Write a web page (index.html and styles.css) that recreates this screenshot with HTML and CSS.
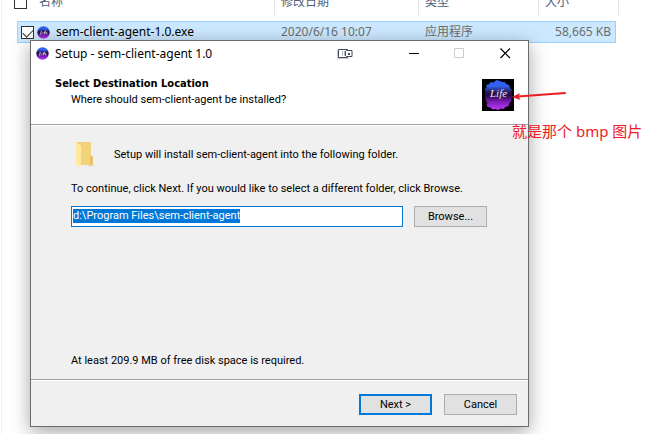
FILE: index.html
```html
<!DOCTYPE html>
<html lang="zh-CN">
<head>
<meta charset="utf-8">
<title>Setup - sem-client-agent 1.0</title>
<link rel="stylesheet" href="styles.css">
</head>
<body>
<svg class="defs" width="0" height="0" aria-hidden="true">
  <defs>
    <linearGradient id="orb" x1="0" y1="0" x2="0" y2="1">
      <stop offset="0" stop-color="#2f5cf6"/>
      <stop offset=".2" stop-color="#3262f0"/>
      <stop offset=".42" stop-color="#241550"/>
      <stop offset=".52" stop-color="#2a0b4a"/>
      <stop offset=".72" stop-color="#7a1eb4"/>
      <stop offset="1" stop-color="#c238ff"/>
    </linearGradient>
    <symbol id="app" viewBox="0 0 13 13">
      <circle cx="6.5" cy="6.5" r="6.2" fill="url(#orb)"/>
      <path d="M3 8h1.500M3.500 7.500l1-2.500M5.500 7.500l.8-1.500M7 8.500l1.500-4M7 6.300h2M9 7.500q.2-1.500 1.200-1.300M9 7.700h1.300" fill="none" stroke="#d5c4e6" stroke-width=".9"/>
    </symbol>
  </defs>
</svg>
<main class="desktop">
  <section class="explorer">
    <table class="files">
      <thead>
        <tr>
          <th><input type="checkbox" class="check" aria-label="全选"><span class="head-name">名称</span></th>
          <th>修改日期</th>
          <th>类型</th>
          <th>大小</th>
        </tr>
      </thead>
      <tbody>
        <tr>
          <td class="file-name">
            <input type="checkbox" class="check" id="file" checked>
            <svg class="app-icon" aria-hidden="true"><use href="#app"/></svg>
            <label for="file">sem-client-agent-1.0.exe</label>
          </td>
          <td>2020/6/16 10:07</td>
          <td>应用程序</td>
          <td class="size">58,665 KB</td>
        </tr>
      </tbody>
    </table>
  </section>

  <section class="dialog" role="dialog" aria-labelledby="dialog-title">
    <header class="titlebar">
      <svg class="app-icon" aria-hidden="true"><use href="#app"/></svg>
      <h1 id="dialog-title">Setup - sem-client-agent 1.0</h1>
      <svg class="device" viewBox="0 0 16 10" aria-hidden="true">
        <path d="M.5 1v8.500h12" fill="none" stroke="#c9c9cc"/>
        <path d="M1.500.5h9v8h-9z" fill="#fff" stroke="#44485a"/>
        <path d="M5 2h1v5H5zM7 2h1v5H7z" fill="#b9bbc4"/>
        <path d="M9.500 1.500h5.500v6h-5.500l-1-1v-4z" fill="#fff" stroke="#44485a"/>
        <path d="M11 4h2v2h-2z" fill="#44485a"/>
      </svg>
      <div class="controls">
        <button type="button" aria-label="Minimize"><svg viewBox="0 0 11 11"><path d="M1 5.500h10" stroke="#000"/></svg></button>
        <button type="button" aria-label="Maximize" disabled><svg viewBox="0 0 11 11"><path d="M.5.5h9v9h-9z" fill="none" stroke="#ccc"/></svg></button>
        <button type="button" aria-label="Close"><svg viewBox="0 0 11 11"><path d="M.5.500l9.500 9.500M10 .5L.5 10" stroke="#000" stroke-width="1.200"/></svg></button>
      </div>
    </header>
    <div class="banner">
      <div class="banner-text">
        <h2>Select Destination Location</h2>
        <p>Where should sem-client-agent be installed?</p>
      </div>
      <svg class="logo" viewBox="0 0 32 32" role="img" aria-label="Life">
        <path d="M0 0h32v32H0z" fill="#000"/>
        <path d="M13 2l2-1 3 1 2 1 3 0 1 2 3 1 1 3 2 2-.5 3 1 3-1 2 0 3-2 2-1 3-3 1-2 2-3-.5-2 1.500-3-1-3 .5-2-2-3-.5-1-3 1-1-2-3 0-3-1-2 1-3-1-3 2-1 0-3 3-1 1-2 3 .5z" fill="url(#orb)"/>
        <text x="8" y="18" class="logo-text">Life</text>
      </svg>
    </div>
    <form class="page">
      <div class="intro">
        <svg class="folder" viewBox="0 0 20 28" aria-hidden="true">
          <path d="M1 1h15v13l2 2v8H6z" fill="#f2d27a"/>
          <path d="M15 14l3 2v8h-3z" fill="#e8c264"/>
          <path d="M14 24h5l1 1-7 1z" fill="#e2dfd5"/>
          <path d="M1 1l5 4v18l-1 4-4-3z" fill="#ffe8a0"/>
        </svg>
        <p>Setup will install sem-client-agent into the following folder.</p>
      </div>
      <label class="prompt" for="path">To continue, click Next. If you would like to select a different folder, click Browse.</label>
      <div class="path-row">
        <div class="field"><input id="path" type="text" value="d:\Program Files\sem-client-agent"></div>
        <button type="button" class="btn">Browse...</button>
      </div>
      <p class="space">At least 209.9 MB of free disk space is required.</p>
    </form>
    <footer class="actions">
      <button type="button" class="btn btn-default">Next &gt;</button>
      <button type="button" class="btn">Cancel</button>
    </footer>
  </section>

  <div class="note">
    <svg class="arrow" viewBox="0 0 56 12" aria-hidden="true">
      <path d="M53 2L6 5.500" stroke="#ee1c24" stroke-width="2" stroke-linecap="round"/>
      <path d="M0 6l8-4-1.500 3.500L8.500 9z" fill="#ee1c24"/>
    </svg>
    <p>就是那个 bmp 图片</p>
  </div>
</main>
<script src="script.js"></script>
</body>
</html>
```
FILE: script.js
```js
// Start with the destination path selected, ready to be replaced.
const path = document.getElementById("path");
path.focus();
path.select();
```
FILE: styles.css
```css
* { box-sizing: border-box; }
body, h1, h2, p { margin: 0; }
body {
  background: #fff;
  color: #000;
  font: 12px/14px "Noto Sans", "Noto Sans CJK SC", sans-serif;
}
button, input { font: inherit; color: inherit; }
.defs { position: absolute; }
.desktop { position: relative; min-height: 100vh; overflow: hidden; }

.explorer {
  min-height: 100vh;
  margin-left: 1px;
  border-left: 1px solid #f0f0f0;
}
.files, .files thead, .files tbody { display: block; }
.files tr { display: grid; }
.files th, .files td {
  display: flex;
  align-items: center;
  padding: 0 0 0 6px;
  font-weight: 400;
  white-space: nowrap;
}
.files thead tr {
  grid-template-columns: 1fr 144px 120px 80px;
  height: 15px;
  margin: 0 28px 6px 12px;
}
.files th {
  align-items: flex-end;
  height: 15px;
  padding-bottom: 6px;
  overflow: hidden;
  border-right: 1px solid #e5e5e5;
  color: #4c607a;
}
.files th:first-child { padding-left: 0; }
.head-name { margin-left: 12px; }
.files tbody tr {
  grid-template-columns: 1fr 144px 120px 76px;
  height: 22px;
  margin: 0 31px 0 15px;
  border: 1px solid #99d1ff;
  background: #cce8ff;
}
.files td { color: #6d6d6d; }
.files .file-name { padding-left: 3px; color: #000; }
.file-name .app-icon { margin: 0 6px 0 3px; }
.files .size { justify-content: flex-end; padding-right: 4px; }

.check {
  appearance: none;
  flex: none;
  width: 13px;
  height: 13px;
  margin: 0;
  border: 1px solid #333;
  background: #fff;
}
.check:checked { position: relative; }
.check:checked::after {
  content: "";
  position: absolute;
  left: 1px;
  top: 2px;
  width: 9px;
  height: 5px;
  border: solid #333;
  border-width: 0 0 1px 1px;
  transform: rotate(-45deg);
}
.app-icon { flex: none; width: 13px; height: 13px; }

.dialog {
  position: absolute;
  inset: 40px 118px 7px 30px;
  display: flex;
  flex-direction: column;
  border: 1px solid #6b6b6b;
  background: #f0f0f0;
  box-shadow: 0 5px 18px rgba(0, 0, 0, .36);
  font-family: Roboto, "Liberation Sans", sans-serif;
  font-size: 11px;
}
.titlebar {
  display: flex;
  align-items: center;
  height: 25px;
  padding-left: 5px;
  background: #fff;
}
.titlebar h1 {
  margin-left: 6px;
  font: 400 12px/14px "Noto Sans", sans-serif;
}
.device { width: 16px; height: 10px; margin-left: auto; }
.controls { display: flex; margin-left: 37px; }
.controls button {
  display: flex;
  align-items: center;
  justify-content: center;
  width: 46px;
  height: 25px;
  padding: 0;
  border: 0;
  background: none;
}
.controls svg { width: 11px; height: 11px; }

.banner {
  display: flex;
  align-items: flex-start;
  justify-content: space-between;
  height: 59px;
  padding: 10px 14px 0 24px;
  background: #fff;
  border-bottom: 1px solid #a0a0a0;
}
.banner h2 { font: 700 11px/16px "DejaVu Sans Condensed", sans-serif; }
.banner p { padding-left: 16px; line-height: 16px; }
.logo { width: 32px; height: 32px; margin-top: 3px; }
.logo-text {
  fill: #f3e9ff;
  font: italic 400 11px "Liberation Serif", serif;
}

.page {
  flex: 1;
  display: flex;
  flex-direction: column;
  padding: 15px 41px 11px 40px;
  border-top: 1px solid #fff;
}
.intro { display: flex; align-items: center; gap: 19px; padding-left: 4px; }
.folder { width: 20px; height: 28px; }
.prompt { margin-top: 13px; }
.path-row { display: flex; gap: 11px; margin-top: 10px; }
.field {
  flex: 1;
  height: 21px;
  padding: 2px 1px;
  border: 1px solid #0078d7;
  background: #fff;
}
.field input {
  display: block;
  width: 100%;
  height: 14px;
  padding: 0;
  border: 0;
  outline: 0;
  background: none;
}
.field input::selection { background: #0078d7; color: #fff; }
.space { margin-top: auto; }

.btn {
  width: 73px;
  height: 21px;
  padding: 0;
  border: 1px solid #adadad;
  background: #e1e1e1;
}
.btn-default { border: 2px solid #0078d7; }
.actions {
  display: flex;
  justify-content: flex-end;
  gap: 12px;
  padding: 14px 11px 11px;
  border-top: 1px solid #a0a0a0;
  box-shadow: inset 0 1px #fff;
}

.note {
  position: absolute;
  top: 91px;
  left: 512px;
  color: #ee1c24;
  font-size: 15px;
  line-height: 20px;
  white-space: nowrap;
}
.arrow { display: block; width: 56px; height: 12px; margin-bottom: 18px; }
```
